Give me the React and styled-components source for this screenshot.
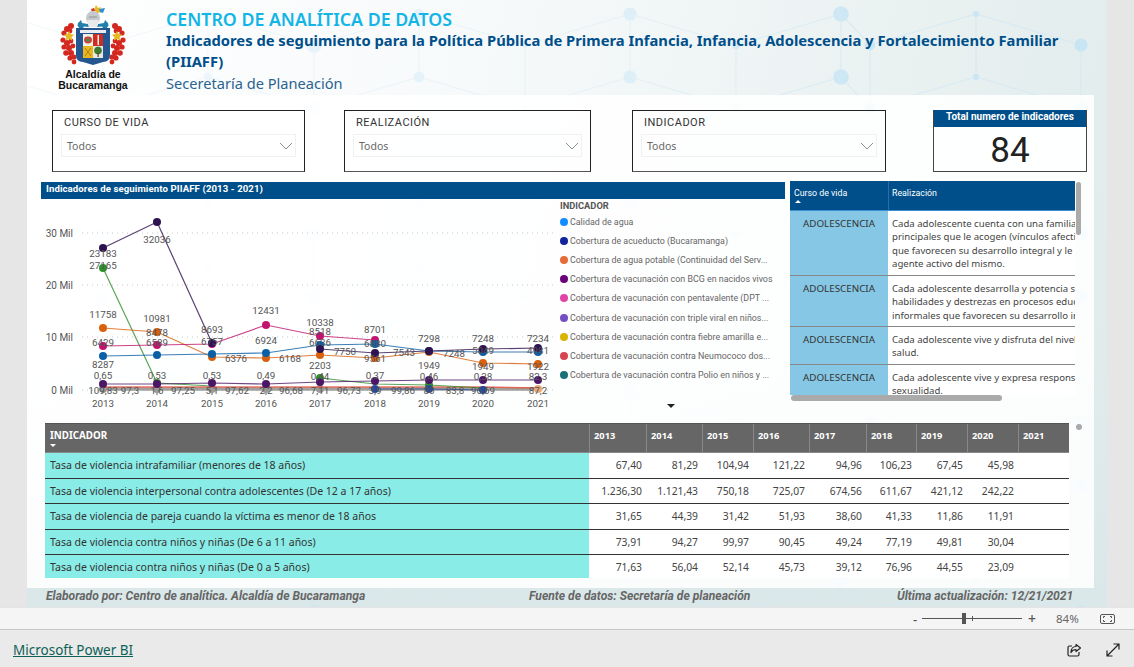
import styled, { createGlobalStyle } from 'styled-components';

const GlobalStyle = createGlobalStyle`
    html, body {
        margin: 0;
        padding: 0;
        background: #e6e6e6;
    }
`;

const YEARS = [2013, 2014, 2015, 2016, 2017, 2018, 2019, 2020, 2021];
const XS = [103, 157, 212, 266, 320, 375, 429, 483, 538];

// y positions per year, null where the series has no value
const SERIES = [
    { color: '#8a8a86', width: 3.5, points: [389, 389, 389, 389, 389, 389, 389, 389, 389], dots: [1, 1, 1, 1, 1, 0, 0, 0, 0], dot: '#9a9a96' },
    { color: '#e8503f', width: 1.4, points: [387, 387, 387, 387, 387, 387, 387, 387, 388], dots: [0, 0, 0, 0, 0, 0, 0, 0, 0] },
    { color: '#2f8f2a', width: 1.2, points: [268, 383, 386, null, 378, 384, 385, 388, null], dots: [1, 1, 0, 0, 1, 0, 1, 0, 0] },
    { color: '#d9600c', width: 1.2, points: [328, 332, 357, 358, 355, 358, 352, 363, 364] },
    { color: '#c2146e', width: 1.2, points: [346, 345, 344, 325, 336, 340, null, null, null] },
    { color: '#0a5fa5', width: 1.2, points: [356, 355, 354, 353, 345, 344, 351, 352, 352] },
    { color: '#2e1350', width: 1.2, points: [248, 222, 343, null, 349, 353, 351, 349, 348] },
    { color: '#4b1665', width: 1.2, points: [384, 384, 383, 384, 382, 381, 380, 380, 380] },
    { color: '#254a97', width: 1.2, points: [null, null, null, null, null, 389, 389, 390, null] },
];

const LABELS = [
    ['23183', 103, 253], ['27165', 103, 265], ['32036', 157, 239], ['11758', 103, 314],
    ['10981', 157, 318], ['8478', 157, 332], ['8693', 212, 329], ['6757', 212, 341],
    ['12431', 266, 310], ['6924', 266, 340], ['6429', 103, 342], ['6589', 157, 342],
    ['8287', 103, 364], ['6376', 236, 358], ['6168', 290, 358], ['0,65', 103, 375],
    ['0,53', 157, 375], ['0,53', 212, 375], ['0,49', 266, 375], ['2203', 320, 365],
    ['0,44', 320, 376], ['7750', 345, 351], ['7543', 404, 352], ['7248', 454, 353],
    ['1949', 429, 365], ['1949', 483, 366], ['1922', 538, 366], ['0,46', 429, 376],
    ['0,38', 483, 376], ['82,3', 538, 376], ['10338', 320, 322], ['8518', 320, 331],
    ['6636', 320, 342], ['8701', 375, 329], ['6880', 375, 343], ['9561', 375, 358],
    ['7298', 429, 338], ['7248', 483, 338], ['7234', 538, 338], ['5049', 483, 350],
    ['4981', 538, 350], ['0,37', 375, 375], ['109,83', 103, 390], ['97,3', 130, 390],
    ['1,6', 157, 390], ['97,25', 183, 390], ['5,1', 212, 390], ['97,62', 237, 390],
    ['2,2', 266, 390], ['96,68', 291, 390], ['7,11', 320, 390], ['96,73', 349, 390],
    ['3,9', 375, 390], ['99,86', 403, 390], ['80', 429, 390], ['83,8', 455, 390],
    ['96,69', 483, 390], ['87,2', 538, 390],
];

const LEGEND = [
    ['#118dff', 'Calidad de agua'],
    ['#12239e', 'Cobertura de acueducto (Bucaramanga)'],
    ['#e66c37', 'Cobertura de agua potable (Continuidad del Serv...'],
    ['#6b007b', 'Cobertura de vacunación con BCG en nacidos vivos'],
    ['#e044a7', 'Cobertura de vacunación con pentavalente (DPT ...'],
    ['#744ec2', 'Cobertura de vacunación con triple viral en niños...'],
    ['#d9b300', 'Cobertura de vacunación contra fiebre amarilla e...'],
    ['#d64550', 'Cobertura de vacunación contra Neumococo dos...'],
    ['#197278', 'Cobertura de vacunación contra Polio en niños y ...'],
];

const LIFE_ROWS = [
    {
        height: 65,
        lines: [
            'Cada adolescente cuenta con una familia y',
            'principales que le acogen (vínculos afectivos)',
            'que favorecen su desarrollo integral y le reconocen',
            'agente activo del mismo.',
        ],
    },
    {
        height: 51,
        lines: [
            'Cada adolescente desarrolla y potencia sus',
            'habilidades y destrezas en procesos educativos',
            'informales que favorecen su desarrollo integral',
        ],
    },
    {
        height: 38,
        lines: ['Cada adolescente vive y disfruta del nivel más', 'salud.'],
    },
    {
        height: 30,
        open: true,
        lines: ['Cada adolescente vive y expresa responsablemente', 'sexualidad.'],
    },
];

const COLUMN_WIDTHS = [57, 56, 51, 56, 57, 50, 51, 51, 51];

const RATE_ROWS = [
    ['Tasa de violencia intrafamiliar (menores de 18 años)', '67,40', '81,29', '104,94', '121,22', '94,96', '106,23', '67,45', '45,98', ''],
    ['Tasa de violencia interpersonal contra adolescentes (De 12 a 17 años)', '1.236,30', '1.121,43', '750,18', '725,07', '674,56', '611,67', '421,12', '242,22', ''],
    ['Tasa de violencia de pareja cuando la víctima es menor de 18 años', '31,65', '44,39', '31,42', '51,93', '38,60', '41,33', '11,86', '11,91', ''],
    ['Tasa de violencia contra niños y niñas (De 6 a 11 años)', '73,91', '94,27', '99,97', '90,45', '49,24', '77,19', '49,81', '30,04', ''],
    ['Tasa de violencia contra niños y niñas (De 0 a 5 años)', '71,63', '56,04', '52,14', '45,73', '39,12', '76,96', '44,55', '23,09', ''],
];

const NetworkPattern = () => {
    const columns = [-30, 76, 181, 287, 392, 498, 603, 709, 814, 843, 949, 1054];
    const rows = [14, 77, 203, 266, 392, 455, 581];
    const nodes = [];
    const lines = [];

    columns.forEach((x, c) => {
        rows.forEach((y, r) => {
            const shifted = c % 2 === 1 ? y + 31 : y;
            nodes.push({ x, y: shifted, r: 3 + ((c * 3 + r * 5) % 5) * 1.2 });
            if (r % 2 === 0) {
                lines.push([x, shifted, x, shifted + 63]);
            }
            if (c < columns.length - 1) {
                const nextY = c % 2 === 1 ? y : y + 31;
                lines.push([x, shifted, columns[c + 1], nextY]);
            }
        });
    });

    return (
        <Pattern viewBox="0 0 1080 607" aria-hidden="true">
            {lines.map(([x1, y1, x2, y2], i) => (
                <line key={i} x1={x1} y1={y1} x2={x2} y2={y2} stroke="#d3e9f4" strokeWidth="1.2" />
            ))}
            {nodes.map((n, i) => (
                <circle key={i} cx={n.x} cy={n.y} r={n.r} fill="#c2e4f5" />
            ))}
        </Pattern>
    );
};

const LEAVES_LEFT = [
    [13, 22, 3], [9, 25, 3], [6, 29, 2.6], [12, 27, 2.4], [5, 36, 2.6], [9, 39, 3], [13, 37, 2.4],
    [6, 43, 2.6], [11, 44, 3], [15, 42, 2.4], [8, 49, 2.8], [13, 49, 3], [12, 54, 2.6], [16, 53, 2.6], [16, 58, 2.4],
];

const Crest = () => (
    <CrestSvg viewBox="0 0 70 62" aria-hidden="true">
        {/* red foliage, mirrored on both sides */}
        <g fill="#d3281f">
            {LEAVES_LEFT.map(([x, y, r]) => (
                <circle key={`${x}-${y}`} cx={x} cy={y} r={r} />
            ))}
            {LEAVES_LEFT.map(([x, y, r]) => (
                <circle key={`${x}-${y}`} cx={70 - x} cy={y} r={r} />
            ))}
        </g>
        {/* yellow stars */}
        <g fill="#e8b923">
            <path d="M11 27l1.600 3 3.400.8-2.400 2.400.6 3.400-3.200-1.600-3.200 1.600.6-3.400-2.400-2.400 3.400-.8z" />
            <path d="M59 27l1.600 3 3.400.8-2.400 2.400.6 3.400-3.200-1.600-3.200 1.600.6-3.400-2.400-2.400 3.400-.8z" />
        </g>
        {/* blue mantling */}
        <g fill="#2380ad">
            <path d="M20 19l3-3 1 3 6 1 1 3-5-.5-2 3-2.500-1-2-3z" />
            <path d="M50 19l-3-3-1 3-6 1-1 3 5-.5 2 3 2.500-1 2-3z" />
        </g>
        {/* crest plume */}
        <path d="M36 6l2-5 2 3 3-1-1 3 2 2-5 1z" fill="#e8b923" />
        <path d="M41 5l6-1-2 5-3-1z" fill="#2d8fd0" />
        <path d="M33 5l3-1 1 3-3 1z" fill="#cf3b30" />
        {/* helmet */}
        <ellipse cx="35" cy="14" rx="7" ry="7" fill="#c5c9cd" />
        <path d="M29 16h12l-2 7h-8z" fill="#e8e9ea" />
        <path d="M31 13h8" stroke="#8d9297" strokeWidth="1" />
        {/* shield */}
        <path d="M18 24h34v27q0 7-7 7l-10 3-10-3q-7 0-7-7z" fill="#24578f" />
        <rect x="22" y="26" width="26" height="3" fill="#e8edf2" />
        <rect x="25" y="30" width="10" height="12" fill="#eef0e4" />
        <rect x="35" y="30" width="10" height="12" fill="#cc2c24" />
        <rect x="25" y="42" width="10" height="12" fill="#e8b71f" />
        <rect x="35" y="42" width="10" height="12" fill="#e6e8e2" />
        <ellipse cx="30" cy="36" rx="4" ry="3.400" fill="#c8443c" />
        <ellipse cx="30" cy="36" rx="2" ry="1.500" fill="#4d8b45" />
        <rect x="39.500" y="31" width="1.500" height="10" fill="#f6f1e6" />
        <path d="M27 44l6 8M33 44l-6 8" stroke="#b8791b" strokeWidth="1" />
        <circle cx="40" cy="46.500" r="3.800" fill="#3e7a2e" />
        <rect x="39.500" y="49" width="1.200" height="4" fill="#5a4020" />
    </CrestSvg>
);

const Chart = () => (
    <ChartSvg viewBox="41 199 515 216" role="img">
        {[233, 285, 337, 390].map((y) => (
            <line key={y} x1="82" y1={y} x2="556" y2={y} stroke="#c8c8c8" strokeWidth="1" strokeDasharray="1 4" />
        ))}
        {[['30 Mil', 233], ['20 Mil', 285], ['10 Mil', 337], ['0 Mil', 390]].map(([text, y]) => (
            <ChartText key={text} x="73" y={y + 4} textAnchor="end" $size={10}>{text}</ChartText>
        ))}
        {SERIES.map((s, i) => {
            const segments = [];
            let current = [];
            s.points.forEach((y, k) => {
                if (y === null) {
                    if (current.length) segments.push(current);
                    current = [];
                } else {
                    current.push(`${XS[k]},${y}`);
                }
            });
            if (current.length) segments.push(current);
            return (
                <g key={i}>
                    {segments.map((seg, k) => (
                        <polyline key={k} points={seg.join(' ')} fill="none" stroke={s.color} strokeWidth={s.width} opacity="0.8" />
                    ))}
                    {s.points.map((y, k) => (
                        y !== null && (!s.dots || s.dots[k]) ? (
                            <circle key={k} cx={XS[k]} cy={y} r="4" fill={s.dot || s.color} />
                        ) : null
                    ))}
                </g>
            );
        })}
        <circle cx="538" cy="389" r="4" fill="#eaa977" />
        {LABELS.map(([text, x, y], i) => (
            <ChartText key={i} x={x} y={y + 3.5} textAnchor="middle" $size={9.8}>{text}</ChartText>
        ))}
        {YEARS.map((year, i) => (
            <ChartText key={year} x={XS[i]} y="407" textAnchor="middle" $size={9.8}>{year}</ChartText>
        ))}
    </ChartSvg>
);

const Slicer = ({ label, width, gap }) => (
    <SlicerBox $width={width} $gap={gap}>
        <SlicerLabel>{label}</SlicerLabel>
        <SlicerField>
            Todos
            <svg width="14" height="8" viewBox="0 0 14 8">
                <path d="M1 1l6 6 6-6" fill="none" stroke="#8a8f94" strokeWidth="1" />
            </svg>
        </SlicerField>
    </SlicerBox>
);

const App = () => {
    return (
        <Page>
            <GlobalStyle />
            <Stage>
                <Report>
                    <NetworkPattern />
                    <Header>
                        <Logo>
                            <Crest />
                            <LogoText>Alcaldía de<br />Bucaramanga</LogoText>
                        </Logo>
                        <Titles>
                            <MainTitle>CENTRO DE ANALÍTICA DE DATOS</MainTitle>
                            <SubTitle>
                                Indicadores de seguimiento para la Política Pública de Primera Infancia, Infancia, Adolescencia y Fortalecimiento Familiar (PIIAFF)
                            </SubTitle>
                            <Office>Seceretaría de Planeación</Office>
                        </Titles>
                    </Header>

                    <Panel>
                        <SlicerRow>
                            <Slicer label="CURSO DE VIDA" width={253} gap={0} />
                            <Slicer label="REALIZACIÓN" width={247} gap={39} />
                            <Slicer label="INDICADOR" width={254} gap={41} />
                            <Card>
                                <CardTitle>Total numero de indicadores</CardTitle>
                                <CardValue>84</CardValue>
                            </Card>
                        </SlicerRow>

                        <MiddleRow>
                            <ChartBlock>
                                <ChartTitle>Indicadores de seguimiento PIIAFF (2013 - 2021)</ChartTitle>
                                <ChartBody>
                                    <Chart />
                                    <Legend>
                                        <LegendTitle>INDICADOR</LegendTitle>
                                        {LEGEND.map(([color, text]) => (
                                            <LegendItem key={text}>
                                                <LegendDot $color={color} />
                                                {text}
                                            </LegendItem>
                                        ))}
                                        <LegendMore />
                                    </Legend>
                                </ChartBody>
                            </ChartBlock>

                            <LifeTable>
                                <LifeHead>
                                    <LifeHeadCell $first>
                                        Curso de vida
                                        <SortUp />
                                    </LifeHeadCell>
                                    <LifeHeadCell>Realización</LifeHeadCell>
                                </LifeHead>
                                {LIFE_ROWS.map((row, i) => (
                                    <LifeRow key={i} $height={row.height} $open={row.open}>
                                        <LifeStage>ADOLESCENCIA</LifeStage>
                                        <LifeText>
                                            {row.lines.map((line) => (
                                                <LifeLine key={line}>{line}</LifeLine>
                                            ))}
                                        </LifeText>
                                    </LifeRow>
                                ))}
                                <VerticalThumb />
                                <HorizontalThumb />
                            </LifeTable>
                        </MiddleRow>

                        <RateTable>
                            <RateHead>
                                <RateHeadName>
                                    INDICADOR
                                    <SortDown />
                                </RateHeadName>
                                {YEARS.map((year, i) => (
                                    <RateHeadYear key={year} $width={COLUMN_WIDTHS[i]}>{year}</RateHeadYear>
                                ))}
                            </RateHead>
                            {RATE_ROWS.map(([name, ...values]) => (
                                <RateRow key={name}>
                                    <RateName>{name}</RateName>
                                    {values.map((value, i) => (
                                        <RateValue key={i} $width={COLUMN_WIDTHS[i]}>{value}</RateValue>
                                    ))}
                                </RateRow>
                            ))}
                            <RateScroll />
                        </RateTable>
                    </Panel>

                    <Credits>
                        <Credit $width={483}>Elaborado por: Centro de analítica. Alcaldía de Bucaramanga</Credit>
                        <Credit $width={368}>Fuente de datos: Secretaría de planeación</Credit>
                        <Credit>Última actualización: 12/21/2021</Credit>
                    </Credits>
                </Report>
            </Stage>

            <StatusBar>
                <ZoomSign>-</ZoomSign>
                <ZoomTrack>
                    <ZoomThumb />
                    <ZoomTick />
                </ZoomTrack>
                <ZoomSign $plus>+</ZoomSign>
                <ZoomValue>84%</ZoomValue>
                <svg width="15" height="12" viewBox="0 0 15 12">
                    <rect x="0.5" y="1.5" width="14" height="9" rx="1.5" fill="none" stroke="#555" />
                    <path d="M3.5 5V3.5H5M10 3.5h1.5V5M11.5 7v1.5H10M5 8.5H3.5V7" fill="none" stroke="#555" />
                </svg>
            </StatusBar>

            <BottomBar>
                <BrandLink href="#">Microsoft Power BI</BrandLink>
                <BottomIcons>
                    <svg width="15" height="15" viewBox="0 0 15 15">
                        <path d="M5 3H2.5A1.5 1.5 0 0 0 1 4.5v7A1.5 1.5 0 0 0 2.5 13h8a1.5 1.5 0 0 0 1.5-1.5V9" fill="none" stroke="#222" strokeWidth="1.2" />
                        <path d="M9 1.5l4.5 3.5L9 8.5V6.5c-2.500 0-4 1-5 3 0-3.500 2-6 5-6z" fill="none" stroke="#222" strokeWidth="1.2" strokeLinejoin="round" />
                    </svg>
                    <svg width="14" height="14" viewBox="0 0 14 14">
                        <path d="M1 13L13 1M7.500 1H13v5.500M1 7.500V13h5.500" fill="none" stroke="#222" strokeWidth="1.2" />
                    </svg>
                </BottomIcons>
            </BottomBar>
        </Page>
    );
};

export default App;

const Page = styled.div`
    width: 1134px;
    height: 667px;
    display: flex;
    flex-direction: column;
    overflow: hidden;
    font-family: "Noto Sans", "Open Sans", sans-serif;
`;

const Stage = styled.div`
    height: 607px;
    padding: 0 27px;
    background: #e6e6e6;
`;

const Report = styled.div`
    position: relative;
    width: 1080px;
    height: 607px;
    display: flex;
    flex-direction: column;
    overflow: hidden;
    background:
        linear-gradient(180deg, rgba(220, 233, 234, 0) 55%, #dbe8e9 97%),
        linear-gradient(105deg, #ffffff 0%, #f6f9fa 40%, #e8f0f0 75%, #dfeaeb 100%);
`;

const Pattern = styled.svg`
    position: absolute;
    left: 0;
    top: 0;
    width: 1080px;
    height: 607px;
    opacity: 0.8;
    mask-image: linear-gradient(90deg, rgba(0, 0, 0, 0.3) 0%, rgba(0, 0, 0, 0.5) 55%, #000 80%);
`;

const Header = styled.header`
    position: relative;
    height: 95px;
    display: flex;
    padding-left: 31px;
`;

const Logo = styled.div`
    width: 70px;
    padding-top: 4px;
    display: flex;
    flex-direction: column;
    align-items: center;
`;

const CrestSvg = styled.svg`
    width: 70px;
    height: 62px;
    flex: none;
`;

const LogoText = styled.div`
    font-family: "Liberation Sans", Arial, sans-serif;
    font-size: 10.500px;
    font-weight: 700;
    line-height: 10.500px;
    color: #111;
    text-align: center;
    white-space: nowrap;
    margin-top: 3px;
`;

const Titles = styled.div`
    width: 900px;
    margin-left: 38px;
    padding-top: 9px;
`;

const MainTitle = styled.div`
    font-size: 17.750px;
    font-weight: 600;
    line-height: 21px;
    color: #12b5e5;
`;

const SubTitle = styled.div`
    font-size: 14.760px;
    font-weight: 700;
    line-height: 21px;
    color: #004f8a;
`;

const Office = styled.div`
    font-size: 14.600px;
    line-height: 22px;
    color: #2a6390;
`;

const Panel = styled.main`
    position: relative;
    width: 1067px;
    height: 493px;
    background: rgba(255, 255, 255, 0.88);
`;

const SlicerRow = styled.div`
    display: flex;
    padding: 15px 0 0 25px;
    height: 61px;
    box-sizing: content-box;
`;

const SlicerBox = styled.div`
    box-sizing: border-box;
    width: ${(p) => p.$width}px;
    height: 62px;
    margin-left: ${(p) => p.$gap}px;
    border: 1px solid #222;
    border-bottom-color: #555;
    padding: 4px 8px 0;
`;

const SlicerLabel = styled.div`
    font-family: Roboto, sans-serif;
    font-size: 11px;
    letter-spacing: 0.5px;
    line-height: 15px;
    color: #333;
    padding-left: 3px;
    margin-bottom: 4px;
`;

const SlicerField = styled.div`
    height: 23px;
    box-sizing: border-box;
    display: flex;
    align-items: center;
    justify-content: space-between;
    border: 1px solid #f0f1f2;
    padding: 0 2px 0 5px;
    font-size: 10.500px;
    color: #666;
`;

const Card = styled.div`
    box-sizing: border-box;
    width: 154px;
    height: 62px;
    margin-left: 47px;
    border: 1px solid #444;
    border-top: 0;
    background: rgba(255, 255, 255, 0.7);
`;

const CardTitle = styled.div`
    height: 17px;
    background: #004f8a;
    color: #fff;
    font-family: Roboto, sans-serif;
    font-size: 10px;
    font-weight: 700;
    line-height: 14px;
    text-align: center;
`;

const CardValue = styled.div`
    font-family: Roboto, sans-serif;
    font-size: 35px;
    line-height: 48px;
    color: #222;
    text-align: center;
`;

const MiddleRow = styled.div`
    display: flex;
    margin-top: 10px;
    padding-left: 14px;
    height: 232px;
`;

const ChartBlock = styled.section`
    width: 744px;
    margin-top: 1px;
`;

const ChartTitle = styled.div`
    height: 17px;
    background: #004f8a;
    color: #fff;
    font-family: Roboto, sans-serif;
    font-size: 9.600px;
    font-weight: 700;
    letter-spacing: 0.1px;
    line-height: 13px;
    padding-left: 5px;
`;

const ChartBody = styled.div`
    display: flex;
`;

const ChartSvg = styled.svg`
    width: 515px;
    height: 216px;
    flex: none;
`;

const ChartText = styled.text`
    font-family: Roboto, sans-serif;
    font-size: ${(p) => p.$size}px;
    fill: #555;
`;

const Legend = styled.div`
    width: 229px;
    padding: 1px 0 0 4px;
    display: flex;
    flex-direction: column;
    position: relative;
`;

const LegendTitle = styled.div`
    font-family: Roboto, sans-serif;
    font-size: 9.300px;
    font-weight: 700;
    line-height: 12px;
    color: #555;
`;

const LegendItem = styled.div`
    display: flex;
    align-items: center;
    gap: 2px;
    height: 19.200px;
    font-family: Roboto, sans-serif;
    font-size: 8.900px;
    color: #666;
    white-space: nowrap;
`;

const LegendDot = styled.span`
    width: 8px;
    height: 8px;
    border-radius: 50%;
    background: ${(p) => p.$color};
    flex: none;
`;

const LegendMore = styled.span`
    position: absolute;
    left: 111px;
    top: 205px;
    border-left: 4px solid transparent;
    border-right: 4px solid transparent;
    border-top: 4px solid #222;
`;

const LifeTable = styled.section`
    position: relative;
    width: 292px;
    height: 221px;
    margin-left: 5px;
`;

const LifeHead = styled.div`
    display: flex;
    width: 285px;
    height: 30px;
    background: #004f8a;
    border-bottom: 1px solid #3a8fd0;
    box-sizing: border-box;
`;

const LifeHeadCell = styled.div`
    position: relative;
    box-sizing: border-box;
    width: ${(p) => (p.$first ? '98px' : '187px')};
    padding: 5px 0 0 ${(p) => (p.$first ? '4px' : '3px')};
    border-left: ${(p) => (p.$first ? '0' : '1px solid #2a6ea3')};
    color: #fff;
    font-family: Roboto, sans-serif;
    font-size: 8.800px;
    line-height: 14px;
`;

const SortUp = styled.span`
    position: absolute;
    left: 5px;
    top: 19px;
    border-left: 3px solid transparent;
    border-right: 3px solid transparent;
    border-bottom: 3px solid #fff;
`;

const SortDown = styled.span`
    position: absolute;
    left: 5px;
    top: 20px;
    border-left: 3px solid transparent;
    border-right: 3px solid transparent;
    border-top: 3px solid #fff;
`;

const LifeRow = styled.div`
    display: flex;
    width: 285px;
    height: ${(p) => p.$height}px;
    box-sizing: border-box;
    border-bottom: ${(p) => (p.$open ? '0' : '1px solid #888')};
    overflow: hidden;
`;

const LifeStage = styled.div`
    width: 98px;
    flex: none;
    background: #85c7e4;
    font-size: 9.800px;
    line-height: 13px;
    text-align: center;
    color: #333;
    padding-top: 6px;
    box-sizing: border-box;
`;

const LifeText = styled.div`
    flex: 1;
    min-width: 0;
    overflow: hidden;
    background: #fff;
    padding: 6px 0 0 4px;
`;

const LifeLine = styled.div`
    font-size: 9.600px;
    line-height: 13.400px;
    color: #444;
    white-space: nowrap;
`;

const VerticalThumb = styled.div`
    position: absolute;
    left: 286px;
    top: 1px;
    width: 5px;
    height: 53px;
    border-radius: 3px;
    background: #aaa;
`;

const HorizontalThumb = styled.div`
    position: absolute;
    left: 1px;
    top: 214px;
    width: 211px;
    height: 6px;
    border-radius: 3px;
    background: #aaa;
`;

const RateTable = styled.section`
    position: relative;
    width: 1024px;
    margin: 10px 0 0 18px;
`;

const RateHead = styled.div`
    display: flex;
    height: 30px;
    box-sizing: border-box;
    background: #666;
    border-top: 1px solid #555;
    border-bottom: 1px solid #888;
`;

const RateHeadName = styled.div`
    position: relative;
    width: 544px;
    flex: none;
    padding: 5px 0 0 5px;
    box-sizing: border-box;
    font-size: 9.800px;
    font-weight: 700;
    line-height: 13px;
    color: #fff;
`;

const RateHeadYear = styled.div`
    width: ${(p) => p.$width}px;
    flex: none;
    box-sizing: border-box;
    border-left: 1px solid #888;
    padding: 5px 0 0 4px;
    font-size: 9.300px;
    font-weight: 700;
    line-height: 13px;
    color: #fff;
`;

const RateRow = styled.div`
    display: flex;
    height: 25.500px;
    box-sizing: border-box;
    background: #fff;
    border-bottom: 1px solid #333;
    &:last-of-type {
        height: 23px;
        border-bottom: 0;
    }
`;

const RateName = styled.div`
    width: 544px;
    flex: none;
    box-sizing: border-box;
    background: #8aece6;
    padding-left: 5px;
    font-size: 10.500px;
    line-height: 25px;
    color: #333;
`;

const RateValue = styled.div`
    width: ${(p) => p.$width}px;
    flex: none;
    box-sizing: border-box;
    padding-right: 4px;
    text-align: right;
    font-size: 10.300px;
    line-height: 25px;
    color: #444;
`;

const RateScroll = styled.span`
    position: absolute;
    left: 1031px;
    top: 1px;
    width: 6px;
    height: 6px;
    border-radius: 50%;
    background: #aaa;
`;

const Credits = styled.footer`
    position: relative;
    height: 19px;
    display: flex;
    padding-left: 19px;
`;

const Credit = styled.div`
    width: ${(p) => (p.$width ? `${p.$width}px` : 'auto')};
    flex: none;
    font-family: Roboto, sans-serif;
    font-size: 12.100px;
    font-style: italic;
    font-weight: 700;
    line-height: 17px;
    color: #666;
    white-space: nowrap;
`;

const StatusBar = styled.div`
    height: 23px;
    box-sizing: border-box;
    display: flex;
    align-items: center;
    padding-right: 19px;
    justify-content: flex-end;
    background: #f5f5f5;
    border-top: 1px solid #e4e4e4;
    border-bottom: 1px solid #c8c8c8;
`;

const ZoomSign = styled.span`
    width: ${(p) => (p.$plus ? '10px' : '6px')};
    margin: ${(p) => (p.$plus ? '0 0 0 6px' : '0 3px 0 0')};
    font-size: ${(p) => (p.$plus ? '14px' : '13px')};
    line-height: 14px;
    font-weight: 500;
    color: #555;
`;

const ZoomTrack = styled.div`
    position: relative;
    width: 100px;
    height: 1px;
    background: #555;
`;

const ZoomThumb = styled.span`
    position: absolute;
    left: 40px;
    top: -5px;
    width: 4px;
    height: 11px;
    background: #555;
`;

const ZoomTick = styled.span`
    position: absolute;
    left: 50px;
    top: -2px;
    width: 1px;
    height: 5px;
    background: #555;
`;

const ZoomValue = styled.span`
    width: 59px;
    margin-left: 3px;
    padding-left: 15px;
    box-sizing: border-box;
    font-size: 11.500px;
    color: #666;
`;

const BottomBar = styled.div`
    height: 37px;
    box-sizing: border-box;
    display: flex;
    align-items: center;
    justify-content: space-between;
    padding: 3px 14px 0 13px;
    background: #eaeaea;
`;

const BrandLink = styled.a`
    font-size: 13.500px;
    color: #0e6157;
    text-decoration: underline;
`;

const BottomIcons = styled.div`
    display: flex;
    gap: 24px;
    align-items: center;
`;
